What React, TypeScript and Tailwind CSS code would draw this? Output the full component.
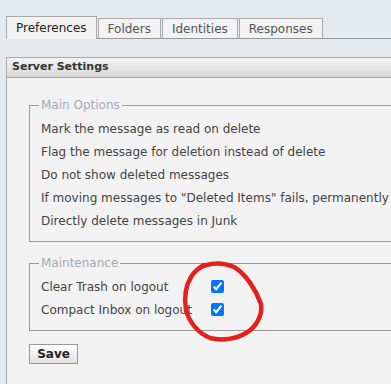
import React from "react";

const font = { fontFamily: '"DejaVu Sans", Verdana, sans-serif' };

function Tab({ label, active }: { label: string; active?: boolean }) {
  return active ? (
    <div className="h-[23px] px-[9px] flex items-center border border-b-0 border-[#aaa] bg-[#f2f2f2] text-[12px] text-[#222] -mb-px relative z-10">
      {label}
    </div>
  ) : (
    <div className="h-[20px] px-[9px] flex items-center border border-b-0 border-[#aaa] bg-[#f2f2f2] text-[12px] text-[#555]">
      {label}
    </div>
  );
}

export default function App() {
  const main = [
    "Mark the message as read on delete",
    "Flag the message for deletion instead of delete",
    "Do not show deleted messages",
    'If moving messages to "Deleted Items" fails, permanently delete them',
    "Directly delete messages in Junk",
  ];
  return (
    <div className="w-[391px] h-[384px] overflow-hidden bg-[#e4eaee] relative" style={font}>
      <div className="pt-[16px] pl-[6px]">
        <div className="flex items-end gap-[1px] border-b border-[#999] w-[600px] h-[23px]">
          <Tab label="Preferences" active />
          <Tab label="Folders" />
          <Tab label="Identities" />
          <Tab label="Responses" />
        </div>
      </div>
      <div className="ml-[6px] mt-[18px] w-[600px] border border-[#aaa] bg-[#f2f2f2] h-[400px]">
        <div className="h-[20px] flex items-center pl-[5px] bg-gradient-to-b from-[#f4f4f4] to-[#d9d9d9] border-b border-[#aaa] text-[11px] font-bold text-[#333]">
          Server Settings
        </div>
        <div className="pl-[22px] pt-[19px]">
          <fieldset className="border border-[#999] pl-[11px] pr-2 pb-[9px] w-[560px]">
            <legend className="ml-[-2px] px-[2px] text-[12px] text-[#a3abb3] leading-[16px]">Main Options</legend>
            <div className="pt-[4px] flex flex-col">
              {main.map((t) => (
                <div key={t} className="h-[23px] flex items-center text-[12px] text-[#444] whitespace-nowrap">
                  {t}
                </div>
              ))}
            </div>
          </fieldset>
          <fieldset className="mt-[13px] border border-[#999] pl-[11px] pr-2 pb-[9px] w-[560px]">
            <legend className="ml-[-2px] px-[2px] text-[12px] text-[#a3abb3] leading-[16px]">Maintenance</legend>
            <div className="pt-[4px] flex flex-col">
              {["Clear Trash on logout", "Compact Inbox on logout"].map((t) => (
                <div key={t} className="h-[23px] flex items-center text-[12px] text-[#444] whitespace-nowrap">
                  <span className="w-[170px]">{t}</span>
                  <input type="checkbox" defaultChecked className="w-[13px] h-[13px] m-0" />
                </div>
              ))}
            </div>
          </fieldset>
          <button className="mt-[13px] w-[49px] h-[20px] border border-[#999] bg-gradient-to-b from-white to-[#e2e2e2] text-[12px] font-bold text-[#222] flex items-center justify-center">
            Save
          </button>
        </div>
      </div>
      <svg className="absolute left-0 top-0 pointer-events-none" width="391" height="384">
        <path
          d="M195 272 C 203 263, 220 261, 234 267 C 246 274, 256 290, 261 304 C 263 316, 255 328, 246 333 C 236 339, 222 341, 210 338 C 198 333, 189 322, 186 310 C 184 297, 186 285, 191 277 C 194 272, 198 268, 204 265"
          fill="none"
          stroke="#e3201b"
          strokeWidth="4.5"
          strokeLinecap="round"
        />
      </svg>
    </div>
  );
}
